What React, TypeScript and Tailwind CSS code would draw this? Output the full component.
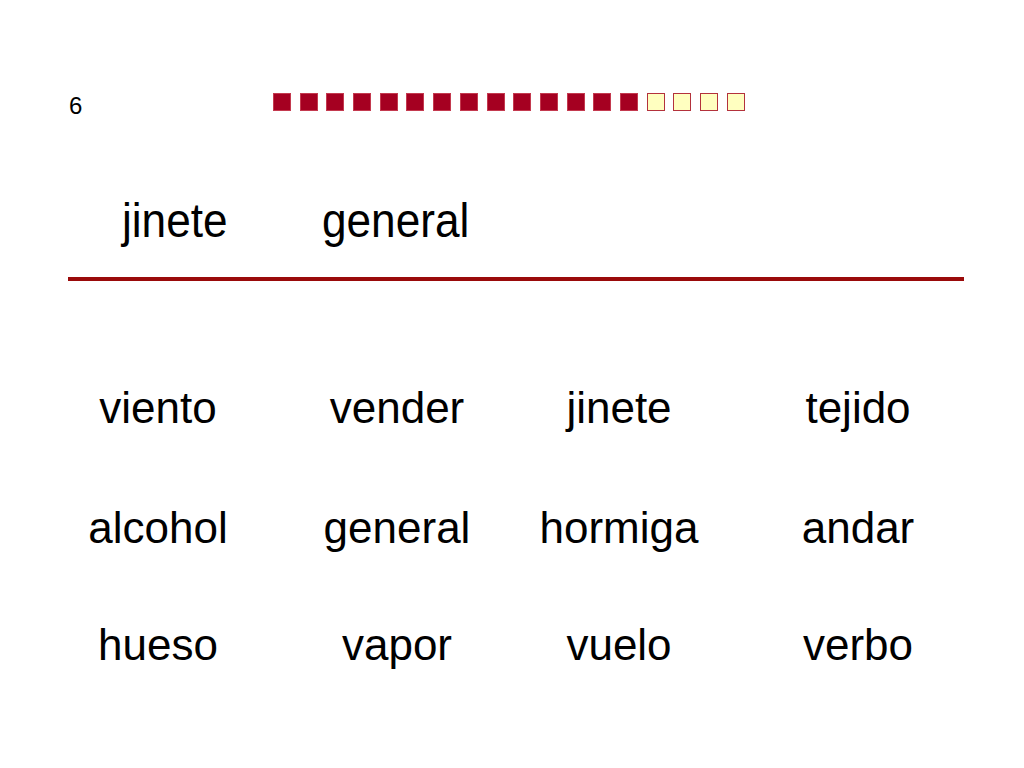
const filled = 14;
const total = 18;

const rows = [
  ['viento', 'vender', 'jinete', 'tejido'],
  ['alcohol', 'general', 'hormiga', 'andar'],
  ['hueso', 'vapor', 'vuelo', 'verbo'],
];

function Row({ words, className }: { words: string[]; className: string }) {
  return (
    <div className={`flex pl-[38px] text-[44px] leading-[44px] ${className}`}>
      <div className="w-[240px] text-center">{words[0]}</div>
      <div className="w-[238px] text-center">{words[1]}</div>
      <div className="w-[206px] text-center">{words[2]}</div>
      <div className="w-[272px] text-center">{words[3]}</div>
    </div>
  );
}

export default function App() {
  return (
    <div className="w-[1024px] h-[768px] bg-white text-black font-['Liberation_Sans',Arial,sans-serif] overflow-hidden">
      {/* slide number + progress squares */}
      <div className="flex items-start h-[18px] mt-[93px] pl-[69px]">
        <span className="w-[204px] text-[24px] leading-[24px] mt-[1px]">6</span>
        <div className="flex gap-[8.7px]">
          {Array.from({ length: total }).map((_, i) => (
            <span
              key={i}
              className={`w-[18px] h-[18px] border ${
                i < filled ? 'bg-[#a50021] border-[#c43a4f]' : 'bg-[#ffffc0] border-[#b3323c]'
              }`}
            />
          ))}
        </div>
      </div>

      {/* title words, slightly condensed */}
      <div className="flex pl-[122px] mt-[86px] text-[48px] leading-[48px]">
        <span className="inline-block w-[200px] scale-x-[0.92] origin-left">jinete</span>
        <span className="inline-block scale-x-[0.92] origin-left">general</span>
      </div>

      <div className="ml-[68px] mt-[32px] w-[896px] h-[4px] bg-[#9a0a0a]" />

      <Row words={rows[0]} className="mt-[105px]" />
      <Row words={rows[1]} className="mt-[76px]" />
      <Row words={rows[2]} className="mt-[73px]" />
    </div>
  );
}
